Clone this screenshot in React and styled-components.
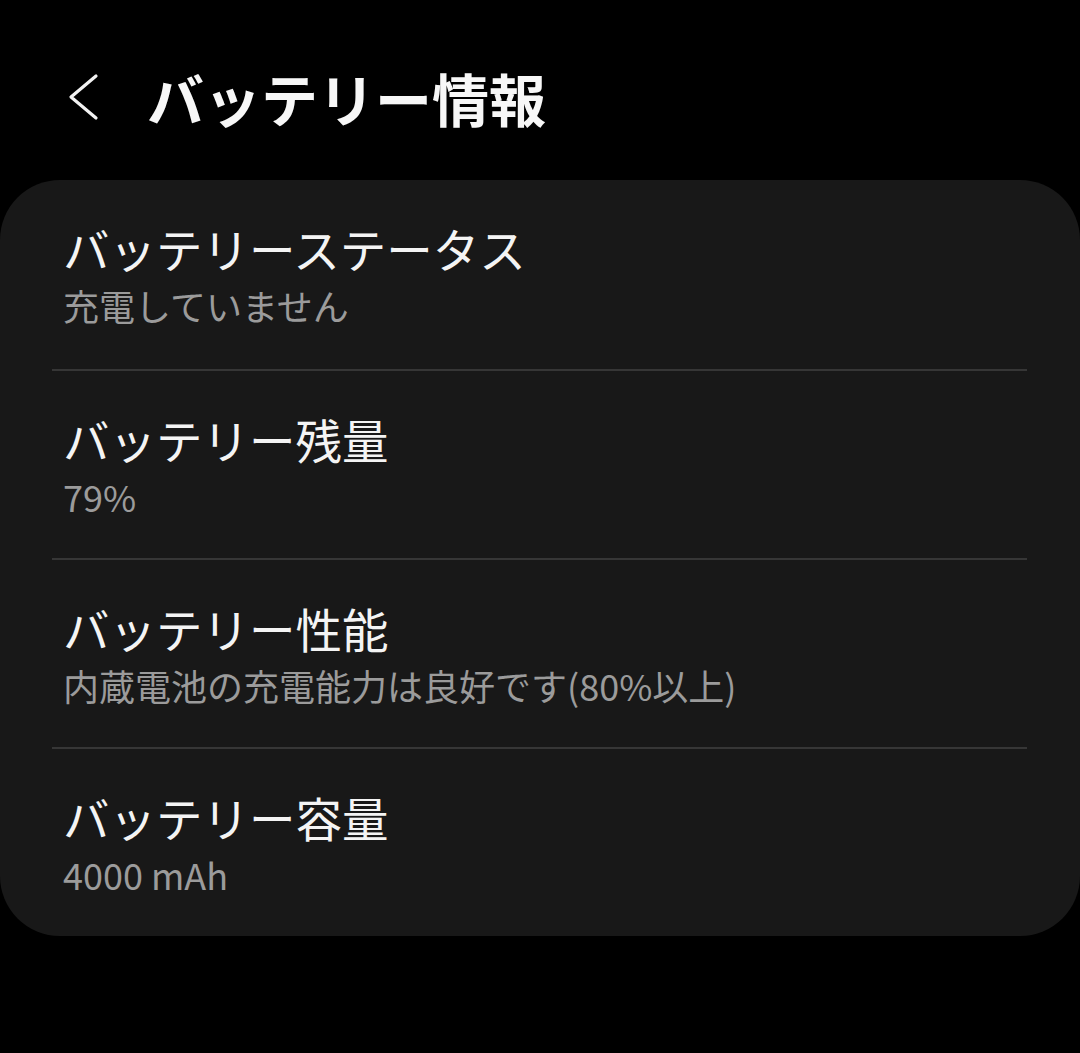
import React from "react";
import styled, { createGlobalStyle } from "styled-components";

const Global = createGlobalStyle`
  html, body { margin: 0; padding: 0; background: #000; }
  body { font-family: "Noto Sans CJK JP", "Noto Sans", sans-serif; }
`;

const Page = styled.div`
  width: 1080px;
  height: 1053px;
  background: #000;
  display: flex;
  flex-direction: column;
`;

const Header = styled.header`
  height: 180px;
  display: flex;
  align-items: center;
  padding-left: 66px;
  padding-top: 14px;
  box-sizing: border-box;
`;

const BackButton = styled.button`
  width: 34px;
  height: 48px;
  padding: 0;
  border: none;
  background: none;
  display: flex;
  align-items: center;
  justify-content: center;
  color: #f2f2f2;
`;

const Title = styled.h1`
  margin: 0 0 0 47px;
  font-size: 57px;
  font-weight: 700;
  line-height: 1;
  color: #f7f7f7;
  letter-spacing: 0;
`;

const Card = styled.section`
  background: #181818;
  border-radius: 60px;
  padding: 0 53px 0 52px;
  display: flex;
  flex-direction: column;
`;

const Row = styled.div`
  height: 189px;
  box-sizing: border-box;
  padding: 37px 0 0 11px;
  border-top: ${(p) => (p.$first ? "none" : "2px solid #363636")};
  display: flex;
  flex-direction: column;
`;

const RowTitle = styled.div`
  font-size: 46.5px;
  line-height: 62px;
  color: #f4f4f4;
  font-weight: 400;
`;

const RowSub = styled.div`
  font-size: 36px;
  line-height: 52px;
  color: #9b9b9b;
  font-weight: 400;
`;

const items = [
  { t: "バッテリーステータス", s: "充電していません" },
  { t: "バッテリー残量", s: "79%" },
  { t: "バッテリー性能", s: "内蔵電池の充電能力は良好です(80%以上)" },
  { t: "バッテリー容量", s: "4000 mAh" },
];

export default function App() {
  return (
    <Page>
      <Global />
      <Header>
        <BackButton aria-label="戻る">
          <svg width="34" height="48" viewBox="0 0 34 48" fill="none">
            <path d="M30 3 L5 24 L30 45" stroke="currentColor" strokeWidth="3.2" strokeLinecap="round" strokeLinejoin="round" />
          </svg>
        </BackButton>
        <Title>バッテリー情報</Title>
      </Header>
      <Card>
        {items.map((it, i) => (
          <Row key={it.t} $first={i === 0}>
            <RowTitle>{it.t}</RowTitle>
            <RowSub>{it.s}</RowSub>
          </Row>
        ))}
      </Card>
    </Page>
  );
}
